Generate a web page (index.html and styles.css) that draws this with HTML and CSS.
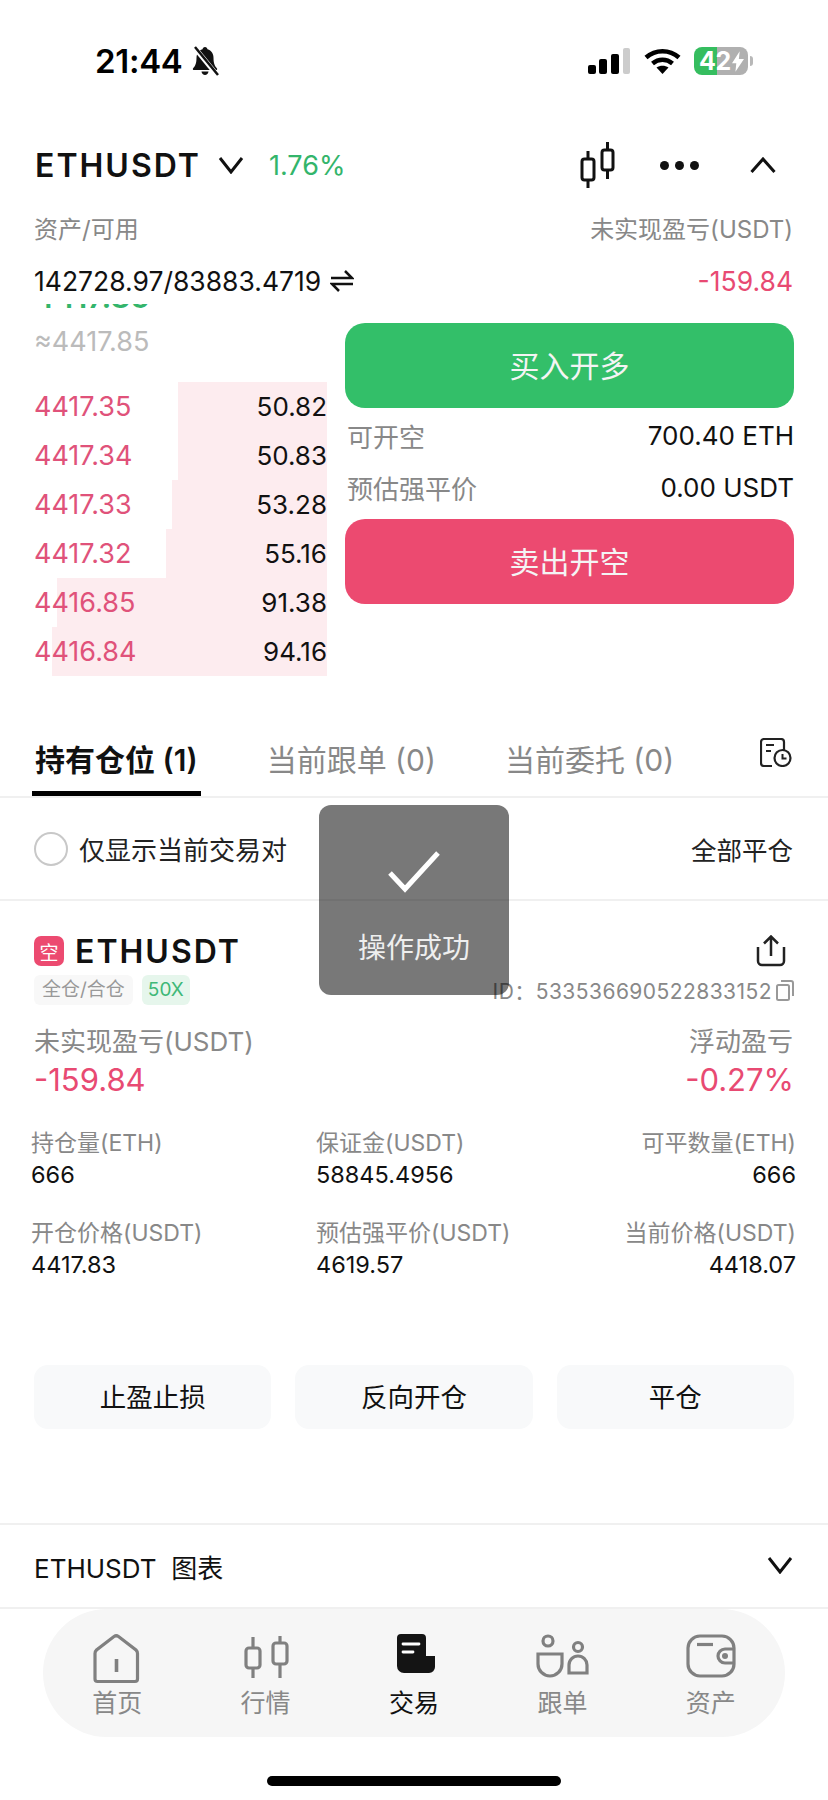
FILE: index.html
```html
<!DOCTYPE html>
<html lang="zh-CN">
<head>
<meta charset="utf-8">
<title>ETHUSDT</title>
<link rel="stylesheet" href="styles.css">
</head>
<body>
<div class="page">
  <div class="status">
    <span class="time">21:44</span>
    <svg class="bell" viewBox="0 0 28 30"><path d="M14 1c1.500 0 2.300 1 2.500 2.300C20.500 4.500 22.500 8 22.500 12c0 6 1.500 8 3.500 10.500.5.800 0 1.500-1 1.500H3c-1 0-1.500-.7-1-1.500C4 20 5.500 18 5.500 12c0-4 2-7.500 6-8.700C11.700 2 12.500 1 14 1z" fill="#111"/><path d="M10.500 25.500h7c-.3 2-1.700 3.500-3.500 3.500s-3.200-1.500-3.500-3.500z" fill="#111"/><path d="M3 1l23 28" stroke="#fff" stroke-width="5"/><path d="M4 1l23 28" stroke="#111" stroke-width="2.500"/></svg>
    <svg class="signal" viewBox="0 0 42 26"><rect x="0" y="17" width="8" height="9" rx="2" fill="#000"/><rect x="11" y="11" width="8" height="15" rx="2" fill="#000"/><rect x="23" y="6" width="8" height="20" rx="2" fill="#000"/><rect x="35" y="0" width="7" height="26" rx="2" fill="#ccc"/></svg>
    <svg class="wifi" viewBox="0 0 37 26"><path d="M2 9.500C11.500 1 25.500 1 35 9.500" fill="none" stroke="#000" stroke-width="4.500"/><path d="M8.500 15.500C14.500 10.500 22.500 10.500 28.500 15.500" fill="none" stroke="#000" stroke-width="4.500"/><path d="M18.500 26L12.500 19.500c3.500-2.500 8.500-2.500 12 0z" fill="#000"/></svg>
    <div class="battery"><span class="batt-num">42</span><svg class="bolt" viewBox="0 0 14 24"><path d="M9 0L0 14h5l-1 10 10-15H8z" fill="#fff"/></svg></div>
  </div>

  <div class="head">
    <span class="symbol">ETHUSDT</span>
    <svg class="chev" viewBox="0 0 26 18"><path d="M2 2l11 14L24 2" fill="none" stroke="#111" stroke-width="3"/></svg>
    <span class="change">1.76%</span>
    <svg class="ic-candle" viewBox="0 0 36 46"><g fill="none" stroke="#111" stroke-width="3"><rect x="2" y="17" width="12" height="21" rx="2.500"/><path d="M8 9v8M8 38v8"/><rect x="22" y="8" width="11" height="20" rx="2.500"/><path d="M27.500 0v8M27.500 28v9"/></g></svg>
    <div class="dots"><i></i><i></i><i></i></div>
    <svg class="caret" viewBox="0 0 26 16"><path d="M1.500 15L13 2l11.500 13" fill="none" stroke="#111" stroke-width="3"/></svg>
  </div>

  <div class="line labels"><span>资产/可用</span><span>未实现盈亏(USDT)</span></div>
  <div class="line values">
    <span class="balance">142728.97/83883.4719<svg class="swap" viewBox="0 0 24 22"><path d="M1 8h21L15 1" fill="none" stroke="#111" stroke-width="2.500"/><path d="M23 14H2l7 7" fill="none" stroke="#111" stroke-width="2.500"/></svg></span>
    <span class="neg">-159.84</span>
  </div>

  <div class="trade">
    <div class="book">
      <div class="clip"><span class="last">4417.85</span></div>
      <div class="fair">≈4417.85</div>
      <div class="rows">
        <div class="row" style="--d:51%"><span class="ask">4417.35</span><span>50.82</span></div>
        <div class="row" style="--d:51%"><span class="ask">4417.34</span><span>50.83</span></div>
        <div class="row" style="--d:53%"><span class="ask">4417.33</span><span>53.28</span></div>
        <div class="row" style="--d:55%"><span class="ask">4417.32</span><span>55.16</span></div>
        <div class="row" style="--d:92%"><span class="ask">4416.85</span><span>91.38</span></div>
        <div class="row" style="--d:94%"><span class="ask">4416.84</span><span>94.16</span></div>
      </div>
    </div>
    <div class="order">
      <div class="btn buy">买入开多</div>
      <div class="info info-a"><span class="muted">可开空</span><span>700.40 ETH</span></div>
      <div class="info info-b"><span class="muted">预估强平价</span><span>0.00 USDT</span></div>
      <div class="btn sell">卖出开空</div>
    </div>
  </div>

  <div class="tabs">
    <div class="tab active">持有仓位 (1)</div>
    <div class="tab">当前跟单 (0)</div>
    <div class="tab">当前委托 (0)</div>
    <svg class="ic-hist" viewBox="0 0 32 29"><path d="M12 28H4a3 3 0 0 1-3-3V4a3 3 0 0 1 3-3h17a3 3 0 0 1 3 3v8" fill="none" stroke="#222" stroke-width="2.200"/><path d="M6 7h8M6 13h5" stroke="#222" stroke-width="2.200"/><circle cx="22.500" cy="20" r="8" fill="#fff" stroke="#222" stroke-width="2.200"/><path d="M22.500 16v4.500h4" fill="none" stroke="#222" stroke-width="2"/></svg>
  </div>

  <div class="filter">
    <span class="radio"></span><span>仅显示当前交易对</span>
    <span class="close-all">全部平仓</span>
  </div>

  <div class="pos">
    <div class="pos-title">
      <span class="badge">空</span><span class="symbol">ETHUSDT</span>
      <svg class="ic-share" viewBox="0 0 30 32"><path d="M15 21V2M8 8.500L15 1.500l7 7" fill="none" stroke="#222" stroke-width="2.500"/><path d="M2 12v14a4 4 0 0 0 4 4h18a4 4 0 0 0 4-4V12" fill="none" stroke="#222" stroke-width="2.500"/></svg>
    </div>
    <div class="pos-tags">
      <span class="tag">全仓/合仓</span><span class="tag lev">50X</span>
      <span class="pos-id">ID：533536690522833152</span>
      <svg class="ic-copy" viewBox="0 0 18 21"><rect x="1" y="5" width="12" height="15" rx="1.500" fill="none" stroke="#999" stroke-width="2"/><path d="M5 1h10a2 2 0 0 1 2 2v13" fill="none" stroke="#999" stroke-width="2"/></svg>
    </div>
    <div class="pnl-l"><span>未实现盈亏(USDT)</span><span>浮动盈亏</span></div>
    <div class="pnl-v"><span>-159.84</span><span>-0.27%</span></div>
  </div>

  <div class="stats">
    <div class="stat"><div class="k">持仓量(ETH)</div><div class="v">666</div></div>
    <div class="stat"><div class="k">保证金(USDT)</div><div class="v">58845.4956</div></div>
    <div class="stat right"><div class="k">可平数量(ETH)</div><div class="v">666</div></div>
    <div class="stat"><div class="k">开仓价格(USDT)</div><div class="v">4417.83</div></div>
    <div class="stat"><div class="k">预估强平价(USDT)</div><div class="v">4619.57</div></div>
    <div class="stat right"><div class="k">当前价格(USDT)</div><div class="v">4418.07</div></div>
  </div>

  <div class="actions">
    <div class="action">止盈止损</div>
    <div class="action">反向开仓</div>
    <div class="action">平仓</div>
  </div>

  <div class="chart">
    <span>ETHUSDT&nbsp; 图表</span>
    <svg class="chev2" viewBox="0 0 26 18"><path d="M2 2l11 14L24 2" fill="none" stroke="#111" stroke-width="3"/></svg>
  </div>

  <nav class="nav">
    <div class="item">
      <svg viewBox="0 0 50 50"><path d="M3 45V19.500c0-1.500.5-2.500 1.500-3.500L22 2.500c1.500-1 3-1 4.500 0L44 16c1 1 1.500 2 1.500 3.500V45c0 1.500-1 2.500-2.500 2.500H5.500C4 47.500 3 46.500 3 45z" fill="none" stroke="#808080" stroke-width="3.200"/><path d="M24.500 25v13" stroke="#808080" stroke-width="3.600"/></svg>
      <span>首页</span>
    </div>
    <div class="item">
      <svg viewBox="0 0 50 50"><g fill="none" stroke="#808080" stroke-width="3.200"><rect x="5" y="14" width="14" height="20" rx="3"/><path d="M12 3v11M12 34v10"/><rect x="32" y="9" width="14" height="21" rx="3"/><path d="M39 2v7M39 30v14"/></g></svg>
      <span>行情</span>
    </div>
    <div class="item current">
      <svg viewBox="0 0 50 50"><path d="M12 0H33a4 4 0 0 1 4 4V22H46V33a6 6 0 0 1-6 6H15a7 7 0 0 1-7-7V4a4 4 0 0 1 4-4z" fill="#141414"/><path d="M14 10h16M14 18h10" stroke="#fff" stroke-width="2.800" stroke-linecap="round"/></svg>
      <span>交易</span>
    </div>
    <div class="item">
      <svg class="ic-copytrade" viewBox="0 0 50 50"><g fill="none" stroke="#808080" stroke-width="3.200"><circle cx="12" cy="7" r="5"/><path d="M2 20H26V30a12 12 0 0 1-24 0z"/><circle cx="42" cy="13" r="4.500"/><path d="M33 39V31a9 9 0 0 1 18 0V39z"/></g></svg>
      <span>跟单</span>
    </div>
    <div class="item">
      <svg viewBox="0 0 50 50"><g fill="none" stroke="#808080" stroke-width="3.200"><rect x="2" y="2" width="46" height="40" rx="12"/><path d="M11 10.500h16"/><path d="M49 15H39a7 7 0 0 0 0 14h10"/></g><circle cx="39" cy="22" r="3" fill="#808080"/></svg>
      <span>资产</span>
    </div>
  </nav>
  <div class="home-bar"></div>

  <div class="toast">
    <svg viewBox="0 0 54 42"><path d="M3 22l15 16L51 2" fill="none" stroke="#fff" stroke-width="5"/></svg>
    <span>操作成功</span>
  </div>
</div>
</body>
</html>
```

FILE: styles.css
```css
* { box-sizing: border-box; }
html, body { margin: 0; padding: 0; background: #fff; }
body { font-family: Inter, "Noto Sans CJK SC", sans-serif; color: #111; }
.page { position: relative; width: 828px; height: 1800px; overflow: hidden; }

.status { height: 122px; display: flex; align-items: center; padding: 0 80px 0 95px; }
.time { font-size: 33px; font-weight: 600; letter-spacing: -0.3px; color: #000; }
.bell { width: 28px; height: 30px; margin-left: 8px; }
.signal { width: 42px; height: 26px; margin-left: auto; }
.wifi { width: 37px; height: 26px; margin-left: 14px; }
.battery { position: relative; width: 54px; height: 28px; margin-left: 13px; border-radius: 8px; display: flex; align-items: center; padding-left: 5px; color: #fff; background: linear-gradient(90deg, #35bd5f 43%, #b0b0b0 43%); }
.battery::after { content: ""; position: absolute; right: -5px; top: 9px; width: 3px; height: 10px; border-radius: 0 3px 3px 0; background: #b8b8b8; }
.batt-num { font-size: 25px; font-weight: 700; line-height: 28px; letter-spacing: -0.5px; }
.bolt { width: 12px; height: 21px; margin-left: 1px; }

.head { height: 86px; display: flex; align-items: center; padding-left: 35px; }
.symbol { font-size: 32px; font-weight: 600; letter-spacing: 2px; }
.chev { width: 26px; height: 18px; margin-left: 17px; }
.change { font-size: 27px; color: #33b56b; margin-left: 25px; }
.ic-candle { width: 36px; height: 46px; margin-left: auto; }
.dots { display: flex; gap: 6px; margin-left: 44px; }
.dots i { display: block; width: 9px; height: 9px; border-radius: 50%; background: #111; }
.caret { width: 26px; height: 16px; margin: 0 52px 0 51px; }

.line { display: flex; justify-content: space-between; padding: 0 35px 0 34px; align-items: center; }
.labels { height: 42px; padding-bottom: 4px; font-size: 24px; color: #888; }
.values { height: 54px; padding-top: 8px; font-size: 26.500px; }
.balance { display: flex; align-items: center; }
.swap { width: 24px; height: 22px; margin-left: 9px; }
.neg { color: #e84a72; }

.trade { display: grid; grid-template-columns: 293px 449px; column-gap: 18px; padding-left: 34px; height: 372px; }
.clip { height: 7px; overflow: hidden; }
.last { display: block; margin-top: -25px; font-size: 31px; line-height: 36px; font-weight: 600; color: #33b56b; }
.fair { height: 62px; line-height: 62px; font-size: 27px; color: #bbb; margin-bottom: 9px; }
.row { height: 49px; display: flex; justify-content: space-between; align-items: center; font-size: 26px; background: linear-gradient(to left, #fdecef var(--d), transparent var(--d)); }
.ask { color: #e0527a; font-size: 27px; }
.order { padding-top: 19px; }
.btn { height: 85px; padding-bottom: 3px; border-radius: 20px; display: flex; align-items: center; justify-content: center; font-size: 30px; color: #f4f4f4; }
.buy { background: #33bf69; }
.sell { background: #ec4a70; }
.info { display: flex; justify-content: space-between; align-items: center; font-size: 26px; padding: 0 0 0 2px; }
.info-a { height: 54px; }
.info-b { height: 50px; margin-bottom: 7px; }
.muted { font-size: 26px; color: #888; }

.tabs { display: flex; gap: 63px; align-items: flex-start; margin-top: 64px; padding: 0 36px 0 32px; border-bottom: 2px solid #f0f0f0; }
.tab { height: 56px; line-height: 40px; padding: 0 3px; font-size: 30px; color: #888; border-bottom: 5px solid transparent; white-space: nowrap; }
.tab.active { font-weight: 600; color: #111; border-bottom-color: #000; }
.ic-hist { width: 32px; height: 29px; margin: -2px 0 0 auto; }

.filter { height: 103px; display: flex; align-items: center; padding: 0 35px 0 34px; font-size: 26px; color: #222; border-bottom: 2px solid #f0f0f0; }
.radio { width: 34px; height: 34px; border-radius: 50%; border: 2.500px solid #c8c8c8; margin-right: 11px; }
.close-all { margin-left: auto; font-size: 25.500px; }

.pos { padding: 35px 34px 0 34px; }
.pos-title { display: flex; align-items: center; height: 30px; }
.badge { width: 30px; height: 30px; margin-right: 11px; border-radius: 7px; background: #ec4a70; color: #fff; font-size: 19px; display: flex; align-items: center; justify-content: center; }
.ic-share { width: 30px; height: 32px; margin: 0 8px 0 auto; }
.pos-tags { display: flex; align-items: center; height: 30px; margin-top: 9px; }
.tag { height: 30px; line-height: 30px; padding: 0 8px; font-size: 19px; color: #999; background: #f8f8f8; border-radius: 6px; }
.tag.lev { margin-left: 9px; padding: 0 6px; color: #3fb878; background: #e6f6ec; }
.pos-id { margin-left: auto; font-size: 21px; color: #888; letter-spacing: .45px; }
.ic-copy { width: 18px; height: 21px; margin-left: 4px; }
.pnl-l { display: flex; justify-content: space-between; height: 34px; line-height: 34px; margin-top: 20px; font-size: 26px; color: #888; padding-right: 1px; }
.pnl-v { display: flex; justify-content: space-between; height: 42px; line-height: 42px; font-size: 31px; color: #e84a72; }

.stats { display: grid; grid-template-columns: 285px 1fr auto; row-gap: 26px; padding: 25px 32px 0 31px; }
.k { height: 34px; line-height: 34px; font-size: 23px; color: #888; }
.v { height: 30px; line-height: 30px; font-size: 23.500px; }
.right { text-align: right; }

.actions { display: grid; grid-template-columns: repeat(3, 1fr); gap: 24px; padding: 0 34px; margin-top: 85px; }
.action { height: 64px; padding-bottom: 3px; display: flex; align-items: center; justify-content: center; border-radius: 14px; background: #f8f9fa; font-size: 26.500px; }

.chart { display: flex; align-items: center; justify-content: space-between; margin-top: 94px; height: 86px; padding: 0 35px 0 34px; border-top: 2px solid #f0f0f0; border-bottom: 2px solid #f0f0f0; font-size: 26px; }
.chev2 { width: 26px; height: 18px; margin-top: -2px; }

.nav { display: grid; grid-template-columns: repeat(5, 1fr); margin: 0 43px; height: 128px; padding-top: 25px; border-radius: 64px; background: #f6f6f6; }
.item { display: flex; flex-direction: column; align-items: center; font-size: 25px; color: #888; }
.item svg { width: 50px; height: 50px; overflow: visible; }
.item .ic-copytrade { margin-left: -3px; }
.item span { height: 34px; line-height: 34px; margin-top: 2px; }
.item.current { color: #111; }
.home-bar { width: 294px; height: 10px; margin: 39px auto 0; border-radius: 5px; background: #000; }

.toast { position: absolute; left: 319px; top: 805px; width: 190px; height: 190px; padding-top: 46px; border-radius: 12px; background: rgba(0, 0, 0, .53); display: flex; flex-direction: column; align-items: center; color: #eee; font-size: 28px; }
.toast svg { width: 54px; height: 42px; }
.toast span { margin-top: 35px; line-height: 40px; }
```
